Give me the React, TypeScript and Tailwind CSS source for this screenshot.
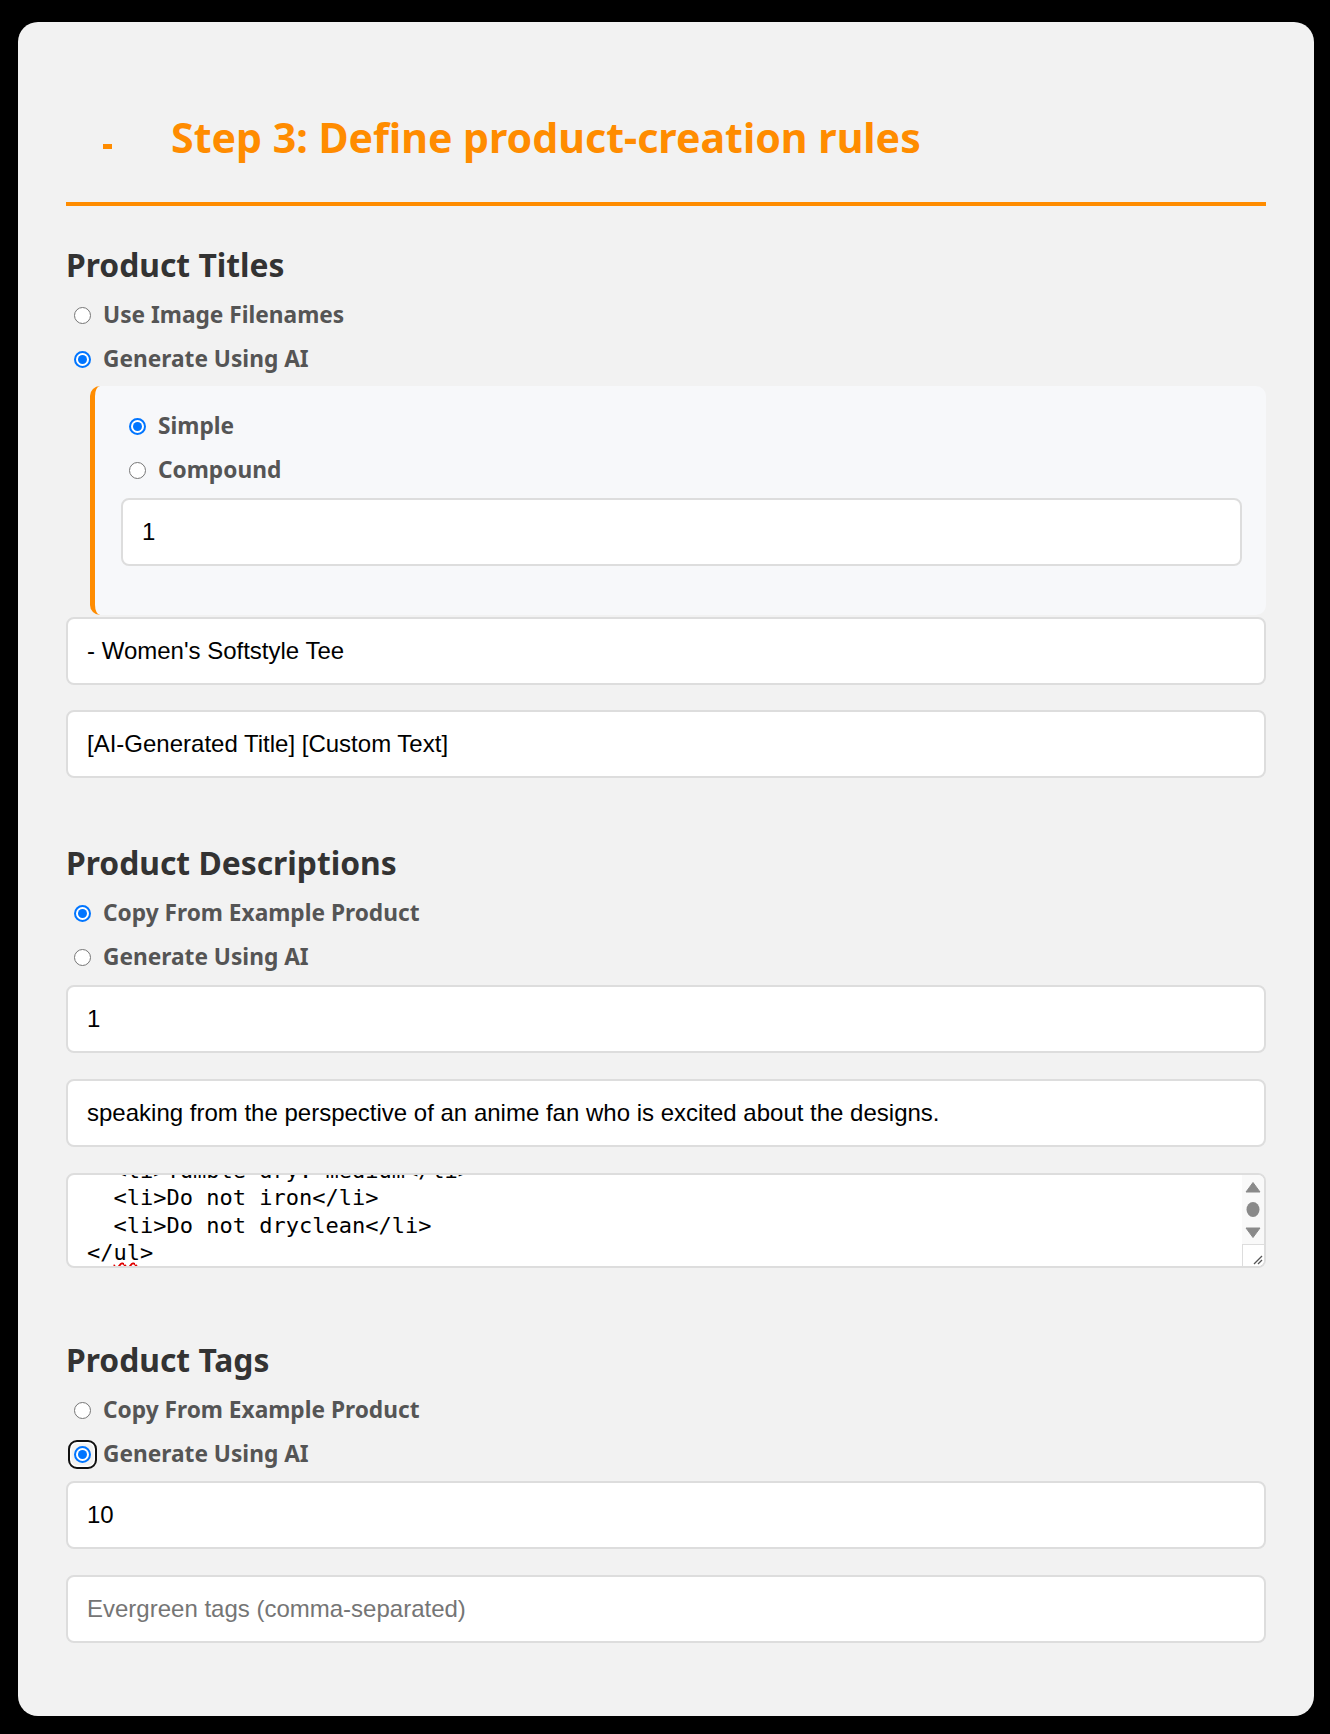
import React from "react";

function Radio({ checked, focus }: { checked?: boolean; focus?: boolean }) {
  return (
    <span className="relative flex h-[17px] w-[17px] shrink-0 items-center justify-center">
      {focus ? (
        <span className="absolute -inset-[6px] rounded-[9px] border-[2.5px] border-[#111] shadow-[inset_0_0_0_1.5px_#ffffff]" />
      ) : null}
      {checked ? (
        <span className="relative flex h-[17px] w-[17px] items-center justify-center rounded-full border-2 border-[#0075ff] bg-white">
          <span className="h-[9px] w-[9px] rounded-full bg-[#0075ff]" />
        </span>
      ) : (
        <span className="block h-[17px] w-[17px] rounded-full border-[1.5px] border-[#767676] bg-white" />
      )}
    </span>
  );
}

function Option({ label, checked, focus }: { label: string; checked?: boolean; focus?: boolean }) {
  return (
    <label className="flex h-[44px] items-center">
      <span className="ml-[8px] mr-[12px]">
        <Radio checked={checked} focus={focus} />
      </span>
      <span className="font-['Noto_Sans','Lato',sans-serif] text-[22.7px] font-bold text-[#555]">{label}</span>
    </label>
  );
}

function Field({ value, placeholder, className = "" }: { value?: string; placeholder?: string; className?: string }) {
  return (
    <input
      readOnly
      defaultValue={value}
      placeholder={placeholder}
      className={
        "block h-[68px] w-full rounded-[8px] border-2 border-[#ddd] bg-white px-[19px] font-['Liberation_Sans',Arial,sans-serif] text-[24px] text-black outline-none placeholder:text-[#757575] " +
        className
      }
    />
  );
}

function H2({ children, className = "" }: { children: React.ReactNode; className?: string }) {
  return (
    <h2 className={"font-['Noto_Sans','Lato',sans-serif] text-[31.8px] font-bold leading-[38px] text-[#333] " + className}>
      {children}
    </h2>
  );
}

function CodeArea() {
  return (
    <div className="relative mt-[26px] h-[95px] overflow-hidden rounded-[8px] border-2 border-[#ddd] bg-white">
      <div className="-mt-[18px] whitespace-pre pl-[19px] font-['DejaVu_Sans_Mono',monospace] text-[22px] leading-[27.4px] text-black">
        <div>{"  <li>Tumble dry: medium</li>"}</div>
        <div>{"  <li>Do not iron</li>"}</div>
        <div>{"  <li>Do not dryclean</li>"}</div>
        <div>
          {"</"}
          <span className="underline decoration-[#e00000] decoration-wavy decoration-[1.5px] underline-offset-[2px]">ul</span>
          {">"}
        </div>
      </div>
      <div className="absolute bottom-0 right-0 top-0 w-[22px] bg-[#f9f9f9]">
        <svg width="22" height="91" viewBox="0 0 22 91">
          <polygon points="4,17 11,7.5 18,17" fill="#8a8a8a" stroke="#8a8a8a" strokeWidth="1" strokeLinejoin="round" />
          <ellipse cx="11" cy="34.5" rx="6.5" ry="7.5" fill="#8a8a8a" />
          <polygon points="4,53 18,53 11,62.5" fill="#8a8a8a" stroke="#8a8a8a" strokeWidth="1" strokeLinejoin="round" />
          <rect x="0.5" y="69.5" width="22" height="22" fill="#ffffff" stroke="#dddddd" strokeWidth="1" />
          <line x1="12" y1="89" x2="20" y2="81" stroke="#555" strokeWidth="1.2" />
          <line x1="16" y1="89" x2="20" y2="85" stroke="#555" strokeWidth="1.2" />
        </svg>
      </div>
    </div>
  );
}

export default function App() {
  return (
    <div className="min-h-[1734px] bg-black pb-[18px] pt-[22px]">
      <div className="ml-[18px] w-[1296px] rounded-[20px] bg-[#f2f2f2] px-[48px] pb-[73px] pt-[48px]">
        <div className="flex items-start border-b-4 border-[#ff8c00] pb-[39px] pt-[41px]">
          <span className="ml-[37px] mt-[33px] block h-[5px] w-[9px] bg-[#ff8c00]" />
          <h1 className="ml-[59px] font-['Noto_Sans','Lato',sans-serif] text-[41.1px] font-bold leading-[52px] text-[#ff8c00]">
            Step 3: Define product-creation rules
          </h1>
        </div>

        <H2 className="mt-[40px]">Product Titles</H2>
        <div className="mt-[9px]">
          <Option label="Use Image Filenames" />
          <Option label="Generate Using AI" checked />
        </div>
        <div className="ml-[24px] mt-[5px] rounded-[10px] border-l-[5px] border-[#ff8c00] bg-[#f7f8fa] pb-[49px] pl-[26px] pr-[24px] pt-[18px]">
          <Option label="Simple" checked />
          <Option label="Compound" />
          <Field value="1" className="mt-[6px]" />
        </div>
        <Field value="- Women's Softstyle Tee" className="mt-[2px]" />
        <Field value="[AI-Generated Title] [Custom Text]" className="mt-[25px]" />

        <H2 className="mt-[66px]">Product Descriptions</H2>
        <div className="mt-[9px]">
          <Option label="Copy From Example Product" checked />
          <Option label="Generate Using AI" />
        </div>
        <Field value="1" className="mt-[6px]" />
        <Field
          value="speaking from the perspective of an anime fan who is excited about the designs."
          className="mt-[26px]"
        />
        <CodeArea />

        <H2 className="mt-[73px]">Product Tags</H2>
        <div className="mt-[9px]">
          <Option label="Copy From Example Product" />
          <Option label="Generate Using AI" checked focus />
        </div>
        <Field value="10" className="mt-[5px]" />
        <Field placeholder="Evergreen tags (comma-separated)" className="mt-[26px]" />
      </div>
    </div>
  );
}
